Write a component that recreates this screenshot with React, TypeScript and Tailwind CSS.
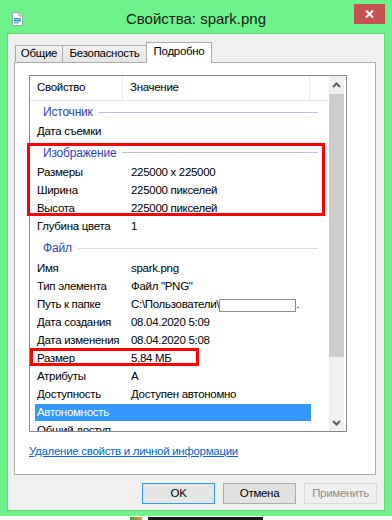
import React from "react";

const FONT = "font-['Liberation_Sans','Arial',sans-serif]";

function Row({ label, value, selected }: { label: string; value?: React.ReactNode; selected?: boolean }) {
  if (selected) {
    return (
      <div className="h-[18px] shrink-0 flex items-start">
        <div className="ml-[5px] w-[276px] h-[17px] bg-[#3399ff] text-white leading-[17px] pl-[2px] whitespace-nowrap">{label}</div>
      </div>
    );
  }
  return (
    <div className="h-[18px] shrink-0 flex items-center whitespace-nowrap text-black">
      <div className="w-[94px] pl-[7px] shrink-0 overflow-hidden">{label}</div>
      <div className="pl-[7px] flex items-center">{value}</div>
    </div>
  );
}

function Group({ label, h, line }: { label: string; h: string; line: string }) {
  return (
    <div className={`${h} shrink-0 flex items-center pl-[13px] pr-[11px]`}>
      <span className="text-[#3344b8] whitespace-nowrap text-[12px] tracking-[-0.2px]">{label}</span>
      <div className={`flex-1 h-px ml-[6px] ${line}`} />
    </div>
  );
}

function Chevron({ down }: { down?: boolean }) {
  return (
    <svg width="9" height="6" viewBox="0 0 9 6" className={down ? "rotate-180" : ""}>
      <path d="M1 5 L4.5 1.5 L8 5" fill="none" stroke="#606060" strokeWidth="2" />
    </svg>
  );
}

export default function App() {
  return (
    <div className={`w-[392px] h-[520px] bg-white relative overflow-hidden text-[11.5px] tracking-[-0.3px] ${FONT}`}>
      <div className="h-[516px] bg-[#6ef38b] flex flex-col px-[7px] pb-[5px]">
        {/* title bar */}
        <div className="h-[33px] shrink-0 relative flex items-start">
          <svg width="11" height="14" viewBox="0 0 11 14" className="absolute left-[5px] top-[12px]">
            <path d="M0.5 0.5 H7 L10.5 4 V13.5 H0.5 Z" fill="#ffffff" stroke="#9aa6b4" />
            <path d="M7 0.5 V4 H10.5" fill="#e8ecf0" stroke="#9aa6b4" />
            <rect x="2" y="6" width="7" height="1.5" fill="#3a8fd0" />
            <rect x="2" y="8" width="7" height="1.5" fill="#2f9e9a" />
            <rect x="2" y="10" width="5" height="1.5" fill="#6fb6e6" />
          </svg>
          <div className="flex-1 text-center text-[15px] tracking-normal leading-[20px] pt-[9px] text-[#1a1a1a]">Свойства: spark.png</div>
          <div className="absolute right-0 top-[4px] w-[31px] h-[20px] bg-[#c75050] flex items-center justify-center">
            <svg width="9" height="8" viewBox="0 0 9 8">
              <path d="M1 0.5 L8 7.5 M8 0.5 L1 7.5" stroke="#ffffff" strokeWidth="2" />
            </svg>
          </div>
        </div>
        {/* client area */}
        <div className="flex-1 border border-[#5fdc7b] bg-[#f0f0f0] flex flex-col">
          <div className="pt-[8px] pl-[6px] pr-[7px] flex flex-col">
            {/* tabs */}
            <div className="h-[20px] flex items-end pl-[1px]">
              <div className="w-[48px] h-[17px] border border-b-0 border-[#acacac] bg-gradient-to-b from-[#f2f2f2] to-[#e4e4e4] flex items-center justify-center leading-none">Общие</div>
              <div className="-ml-px w-[85px] h-[17px] border border-b-0 border-[#acacac] bg-gradient-to-b from-[#f2f2f2] to-[#e4e4e4] flex items-center justify-center leading-none">Безопасность</div>
              <div className="-ml-px w-[66px] h-[21px] -mb-px border border-b-0 border-[#acacac] bg-white flex items-center justify-center leading-none pb-[3px] relative z-10">Подробно</div>
            </div>
            {/* panel */}
            <div className="h-[413px] w-[362px] border border-[#acacac] bg-white pt-[12px] pl-[14px] flex flex-col">
              <div className="w-[318px] h-[357px] shrink-0 border border-[#828790] flex overflow-hidden">
                <div className="flex-1 flex flex-col overflow-hidden">
                  {/* header */}
                  <div className="h-[25px] shrink-0 border-b border-[#e3e8f0] flex text-black bg-white">
                    <div className="w-[93px] pl-[7px] flex items-center border-r border-[#e5ecf5]">Свойство</div>
                    <div className="w-[187px] pl-[7px] flex items-center border-r border-[#e5ecf5]">Значение</div>
                  </div>
                  <Group label="Источник" h="h-[22px]" line="bg-[#b9c1da]" />
                  <Row label="Дата съемки" />
                  <Group label="Изображение" h="h-[23px]" line="bg-[#b9c1da]" />
                  <Row label="Размеры" value="225000 x 225000" />
                  <Row label="Ширина" value="225000 пикселей" />
                  <Row label="Высота" value="225000 пикселей" />
                  <Row label="Глубина цвета" value="1" />
                  <Group label="Файл" h="h-[24px]" line="bg-[#d5dde8]" />
                  <Row label="Имя" value="spark.png" />
                  <Row label="Тип элемента" value={'Файл "PNG"'} />
                  <Row
                    label="Путь к папке"
                    value={
                      <>
                        <span>C:\Пользователи\</span>
                        <span className="inline-block w-[77px] h-[13px] border border-[#8c8c8c] bg-white" />
                        <span>.</span>
                      </>
                    }
                  />
                  <Row label="Дата создания" value="08.04.2020 5:09" />
                  <Row label="Дата изменения" value="08.04.2020 5:08" />
                  <Row label="Размер" value="5,84 МБ" />
                  <Row label="Атрибуты" value="A" />
                  <Row label="Доступность" value="Доступен автономно" />
                  <Row label="Автономность" selected />
                  <Row label="Общий доступ" />
                </div>
                {/* scrollbar */}
                <div className="w-[17px] shrink-0 pr-[2px] bg-white flex">
                  <div className="flex-1 bg-[#f0f0f0] flex flex-col">
                    <div className="h-[18px] shrink-0 flex items-center justify-center">
                      <Chevron />
                    </div>
                    <div className="h-[263px] shrink-0 bg-[#cdcdcd]" />
                    <div className="flex-1" />
                    <div className="h-[17px] shrink-0 flex items-center justify-center">
                      <Chevron down />
                    </div>
                  </div>
                </div>
              </div>
              <div className="mt-[11px] h-[16px] leading-[16px] text-[#0066cc] underline">Удаление свойств и личной информации</div>
            </div>
          </div>
          {/* buttons */}
          <div className="mt-[8px] pr-[7px] flex justify-end gap-[8px]">
            <div className="w-[73px] h-[21px] border border-[#3399ff] bg-[#e5e5e5] flex items-center justify-center">OK</div>
            <div className="w-[73px] h-[21px] border border-[#adadad] bg-[#e1e1e1] flex items-center justify-center">Отмена</div>
            <div className="w-[73px] h-[21px] border border-[#d9d9d9] bg-[#f0f0f0] text-[#8c8c8c] flex items-center justify-center">Применить</div>
          </div>
        </div>
      </div>
      {/* desktop strip below */}
      <div className="h-[4px] flex items-end">
        <div className="ml-[130px] w-[12px] h-[3px] bg-gradient-to-r from-[#2e9e4a] to-[#e08a2a]" />
        <div className="ml-[6px] w-[115px] h-[3px] bg-[#1a1a1a]" />
      </div>
      {/* annotation rectangles */}
      <div className="absolute left-[27px] top-[143px] w-[298px] h-[73px] border-[3px] border-[#ff0000]" />
      <div className="absolute left-[30px] top-[348px] w-[169px] h-[18px] border-[3px] border-[#ff0000]" />
    </div>
  );
}
